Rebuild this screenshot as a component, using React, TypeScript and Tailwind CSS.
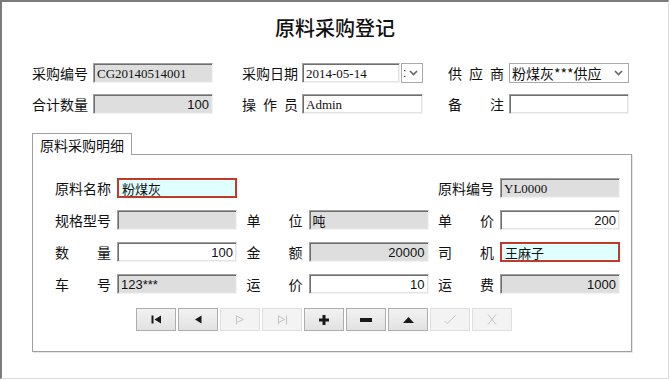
import React from "react";

type Kind = "gray" | "white" | "red";

const cjk = "font-['Noto_Sans_CJK_SC',sans-serif]";
const serif = "font-['Liberation_Serif','Noto_Sans_CJK_SC',serif]";
const sans = "font-['Liberation_Sans','Noto_Sans_CJK_SC',sans-serif]";

const sunken =
    "border border-t-[#a0a0a0] border-l-[#a0a0a0] border-r-[#f2f2f2] border-b-[#f2f2f2] shadow-[inset_1px_1px_0_#6e6e6e,inset_-1px_-1px_0_#e3e3e3]";

function Field({
    value = "",
    kind = "white",
    right = false,
    font = sans,
    width = "w-[120px]",
}: {
    value?: string;
    kind?: Kind;
    right?: boolean;
    font?: string;
    width?: string;
}) {
    const skin =
        kind === "red"
            ? "border-2 border-[#c0392b] bg-[#e0ffff]"
            : kind === "gray"
            ? `${sunken} bg-[#dedede]`
            : `${sunken} bg-white`;
    return (
        <div
            className={`${width} h-[20px] ${skin} flex items-center px-[3px] text-[13px] text-[#111] leading-none ${font} ${
                right ? "justify-end" : "justify-start"
            }`}
        >
            {value}
        </div>
    );
}

function Label({ text }: { text: string }) {
    const chars = text.split("");
    return (
        <div className={`w-[56px] flex justify-between text-[14px] text-[#111] leading-none ${cjk}`}>
            {chars.map((c, i) => (
                <span key={i}>{c}</span>
            ))}
        </div>
    );
}

function Chevron() {
    return (
        <svg width="9" height="6" viewBox="0 0 9 6">
            <path d="M1 1 L4.5 4.5 L8 1" fill="none" stroke="#666" strokeWidth="1.6" />
        </svg>
    );
}

function Cell({ label, children, gap = "gap-[6px]" }: { label: string; children: React.ReactNode; gap?: string }) {
    return (
        <div className={`flex items-center ${gap}`}>
            <Label text={label} />
            {children}
        </div>
    );
}

const on = "#1a1a1a";
const off = "#c4c4c4";

const icons: { enabled: boolean; svg: React.ReactNode }[] = [
    {
        enabled: true,
        svg: (
            <svg width="11" height="9" viewBox="0 0 11 9">
                <rect x="0.5" y="0.5" width="2" height="8" fill={on} />
                <path d="M10 0.5 L3.5 4.5 L10 8.5 Z" fill={on} />
            </svg>
        ),
    },
    {
        enabled: true,
        svg: (
            <svg width="8" height="9" viewBox="0 0 8 9">
                <path d="M7.5 0.5 L1 4.5 L7.5 8.5 Z" fill={on} />
            </svg>
        ),
    },
    {
        enabled: false,
        svg: (
            <svg width="10" height="10" viewBox="0 0 10 10">
                <path d="M1.5 0.5 V9.5 M1.5 1 L8.5 4.5 L1.5 7.5" fill="none" stroke={off} strokeWidth="1" />
            </svg>
        ),
    },
    {
        enabled: false,
        svg: (
            <svg width="11" height="10" viewBox="0 0 11 10">
                <path d="M1.5 0.5 V9.5 M1.5 1 L7.5 4.5 L1.5 7.5 M9.5 0.5 V9.5" fill="none" stroke={off} strokeWidth="1" />
            </svg>
        ),
    },
    {
        enabled: true,
        svg: (
            <svg width="10" height="10" viewBox="0 0 10 10">
                <path d="M3.5 0 H6.5 V3.5 H10 V6.5 H6.5 V10 H3.5 V6.5 H0 V3.5 H3.5 Z" fill={on} />
            </svg>
        ),
    },
    {
        enabled: true,
        svg: (
            <svg width="12" height="4" viewBox="0 0 12 4">
                <rect x="0" y="0" width="12" height="4" fill={on} />
            </svg>
        ),
    },
    {
        enabled: true,
        svg: (
            <svg width="11" height="6" viewBox="0 0 11 6">
                <path d="M0 6 L5.5 0 L11 6 Z" fill={on} />
            </svg>
        ),
    },
    {
        enabled: false,
        svg: (
            <svg width="12" height="9" viewBox="0 0 12 9">
                <path d="M0.5 6 L3 8.5 L11.5 0.5" fill="none" stroke={off} strokeWidth="1" />
            </svg>
        ),
    },
    {
        enabled: false,
        svg: (
            <svg width="10" height="11" viewBox="0 0 10 11">
                <path d="M1 0.5 L9 10.5 M9 0.5 L1 10.5" fill="none" stroke={off} strokeWidth="1" />
            </svg>
        ),
    },
];

export default function App() {
    return (
        <div className="w-[670px] h-[380px] bg-white">
            <div className="w-[669px] h-[379px] border-t-2 border-l-2 border-r border-b border-t-[#7c7c7c] border-l-[#7c7c7c] border-r-[#dddddd] border-b-[#dddddd] flex flex-col">
                <div className={`mt-[12px] h-[28px] flex items-center justify-center text-[20px] font-medium text-[#111] ${cjk}`}>
                    原料采购登记
                </div>

                <div className="mt-[21px] pl-[30px] flex flex-col gap-[11px]">
                    <div className="flex items-center">
                        <Cell label="采购编号" gap="gap-[5px]">
                            <Field value="CG20140514001" kind="gray" font={serif} />
                        </Cell>
                        <div className="ml-[29px]">
                            <Cell label="采购日期" gap="gap-[4px]">
                                <div className="flex items-center gap-[1px]">
                                    <Field value="2014-05-14" width="w-[98px]" font={serif} />
                                    <div className="w-[22px] h-[20px] border border-[#a9a9a9] bg-white flex items-center gap-[3px] pl-[1px]">
                                        <span className={`text-[12px] leading-none text-[#222] ${sans}`}>:</span>
                                        <Chevron />
                                    </div>
                                </div>
                            </Cell>
                        </div>
                        <div className="ml-[25px]">
                            <Cell label="供应商" gap="gap-[5px]">
                                <div className={`w-[120px] h-[20px] border border-[#a9a9a9] bg-white flex items-center justify-between pl-[2px] pr-[5px] text-[14px] leading-none text-[#111] ${cjk}`}>
                                    <span>粉煤灰***供应</span>
                                    <Chevron />
                                </div>
                            </Cell>
                        </div>
                    </div>
                    <div className="flex items-center">
                        <Cell label="合计数量" gap="gap-[5px]">
                            <Field value="100" kind="gray" right />
                        </Cell>
                        <div className="ml-[29px]">
                            <Cell label="操作员" gap="gap-[4px]">
                                <Field value="Admin" width="w-[121px]" font={serif} />
                            </Cell>
                        </div>
                        <div className="ml-[25px]">
                            <Cell label="备注" gap="gap-[5px]">
                                <Field />
                            </Cell>
                        </div>
                    </div>
                </div>

                <div className="mt-[19px] ml-[30px] w-[600px] flex flex-col">
                    <div
                        className={`relative z-10 w-[100px] h-[22px] border border-b-0 border-[#a0a0a0] bg-white flex items-center pl-[7px] text-[14px] leading-none text-[#111] ${cjk}`}
                    >
                        原料采购明细
                    </div>
                    <div className="-mt-[1px] h-[198px] border border-[#a0a0a0] shadow-[1px_1px_0_#e6e6e6] pt-[23px] pl-[22px] flex flex-col">
                        <div className="grid grid-cols-[182px_182px_182px] gap-x-[9.5px] gap-y-[12px]">
                            <Cell label="原料名称">
                                <Field value="粉煤灰" kind="red" font={cjk} />
                            </Cell>
                            <div />
                            <Cell label="原料编号">
                                <Field value="YL0000" kind="gray" font={serif} />
                            </Cell>

                            <Cell label="规格型号">
                                <Field kind="gray" />
                            </Cell>
                            <Cell label="单位">
                                <Field value="吨" kind="gray" font={cjk} />
                            </Cell>
                            <Cell label="单价">
                                <Field value="200" right />
                            </Cell>

                            <Cell label="数量">
                                <Field value="100" right />
                            </Cell>
                            <Cell label="金额">
                                <Field value="20000" kind="gray" right />
                            </Cell>
                            <Cell label="司机">
                                <Field value="王麻子" kind="red" font={cjk} />
                            </Cell>

                            <Cell label="车号">
                                <Field value="123***" kind="gray" />
                            </Cell>
                            <Cell label="运价">
                                <Field value="10" right />
                            </Cell>
                            <Cell label="运费">
                                <Field value="1000" kind="gray" right />
                            </Cell>
                        </div>

                        <div className="mt-[14px] ml-[81px] flex gap-[2px]">
                            {icons.map((b, i) => (
                                <div
                                    key={i}
                                    className={`w-[40px] h-[23px] border flex items-center justify-center ${
                                        b.enabled
                                            ? "border-[#adadad] bg-gradient-to-b from-[#f2f2f2] to-[#e2e2e2]"
                                            : "border-[#dedede] bg-[#f3f3f3]"
                                    }`}
                                >
                                    {b.svg}
                                </div>
                            ))}
                        </div>
                    </div>
                </div>
            </div>
        </div>
    );
}
